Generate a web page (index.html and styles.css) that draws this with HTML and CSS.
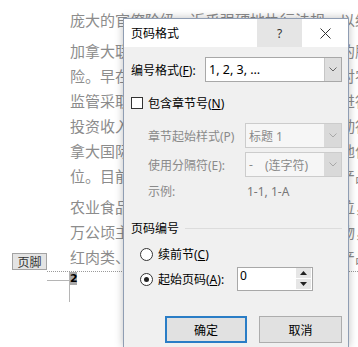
FILE: index.html
```html
<!DOCTYPE html>
<html>
<head>
<meta charset="utf-8">
<link rel="stylesheet" href="styles.css">
</head>
<body>
<div class="doc">
  <div class="para">
    <div class="line">庞大的官僚阶级，近乎强硬地执行法规，以给予帮助的情况下</div>
  </div>
  <div class="para">
    <div class="line">加拿大联邦政府对农业食品行业提供全面的服务与支持，</div>
    <div class="line">险。早在上世纪初期，加拿大政府就开始对农业资金进行</div>
    <div class="line">监管采取了多种措施，包括设立专门机构进行研究，</div>
    <div class="line">投资收入与出口补贴政策也逐步完善，推动行业向</div>
    <div class="line">拿大国际贸易中农产品出口一直占据重要地位以上</div>
    <div class="line">位。目前，加拿大已成为世界上主要的农产品出口国之一。</div>
  </div>
  <div class="para para-last">
    <div class="line">农业食品产业在加拿大经济中占有重要地位，耕地占</div>
    <div class="line">万公顷主要种植小麦、油菜籽和大豆等作物，确立</div>
    <div class="line">红肉类、乳制品和禽类产品也是主要出口产品，姬</div>
  </div>
  <div class="footer">
    <span class="footer-tag">页脚</span>
    <div class="crop"><div class="crop-h"></div></div>
    <div class="pgnum"><span class="pgnum-box">2</span></div>
  </div>
</div>

<div class="dlg">
  <div class="titlebar">
    <span class="title">页码格式</span>
    <span class="tb-btn tb-help">?</span>
    <span class="tb-btn tb-close"><svg width="11" height="11" viewBox="0 0 11 11"><path d="M0.5 0.5L10.5 10.5M10.5 0.5L0.5 10.5" stroke="#333" stroke-width="1" fill="none"/></svg></span>
  </div>
  <div class="dbody">
    <div class="row row-fmt">
      <span class="lbl-fmt">编号格式(<u>F</u>):</span>
      <div class="combo combo-fmt">
        <span class="combo-text">1, 2, 3, …</span>
        <span class="combo-arrow"><svg width="8" height="5" viewBox="0 0 8 5"><path d="M0.5 0.5L4 4L7.5 0.5" stroke="#666" stroke-width="1" fill="none"/></svg></span>
      </div>
    </div>
    <div class="row row-chk">
      <span class="chk"></span><span>包含章节号(<u>N</u>)</span>
    </div>
    <div class="row row-sub">
      <span class="lbl-sub">章节起始样式(P)</span>
      <div class="combo combo-dis">
        <span class="combo-text">标题 1</span>
        <span class="combo-arrow"><svg width="8" height="5" viewBox="0 0 8 5"><path d="M0.5 0.5L4 4L7.5 0.5" stroke="#a8a8a8" stroke-width="1" fill="none"/></svg></span>
      </div>
    </div>
    <div class="row row-sub2">
      <span class="lbl-sub">使用分隔符(E):</span>
      <div class="combo combo-dis">
        <span class="combo-text">-<span class="dash-gap"></span>(连字符)</span>
        <span class="combo-arrow"><svg width="8" height="5" viewBox="0 0 8 5"><path d="M0.5 0.5L4 4L7.5 0.5" stroke="#a8a8a8" stroke-width="1" fill="none"/></svg></span>
      </div>
    </div>
    <div class="row row-ex">
      <span class="lbl-sub">示例:</span><span class="ex-val">1-1, 1-A</span>
    </div>
    <div class="row row-head">
      <span>页码编号</span><span class="sep"></span>
    </div>
    <div class="row row-r1">
      <span class="radio"></span><span>续前节(<u>C</u>)</span>
    </div>
    <div class="row row-r2">
      <span class="radio radio-on"></span><span class="lbl-r2">起始页码(<u>A</u>):</span>
      <div class="spin">
        <span class="spin-text">0</span>
        <span class="spin-btns">
          <span class="sb"><svg width="7" height="4" viewBox="0 0 7 4"><polygon points="3.5,0 7,4 0,4" fill="#222"/></svg></span>
          <span class="sb"><svg width="7" height="4" viewBox="0 0 7 4"><polygon points="0,0 7,0 3.5,4" fill="#222"/></svg></span>
        </span>
      </div>
    </div>
    <div class="row row-btns">
      <button class="btn btn-ok">确定</button>
      <button class="btn btn-cancel">取消</button>
    </div>
  </div>
</div>
</body>
</html>
```

FILE: styles.css
```css
* { box-sizing: border-box; }
html, body { margin: 0; padding: 0; }
body {
  width: 358px;
  height: 347px;
  overflow: hidden;
  position: relative;
  background: #fff;
}

/* background document */
.doc {
  width: 358px;
  height: 347px;
  overflow: hidden;
  padding: 7px 0 0 70px;
  font-family: "Noto Sans CJK SC", sans-serif;
  font-size: 15px;
  color: #8c8c8c;
}
.para { margin-bottom: 6px; }
.para-last { margin-bottom: 0; }
.line {
  height: 25px;
  line-height: 25px;
  white-space: nowrap;
  overflow: hidden;
}
.footer {
  margin: 2px 0 0 -23px;
  border-top: 1px dotted #9a9a9a;
  position: relative;
  display: flex;
}
.footer-tag {
  position: absolute;
  right: 100%;
  bottom: calc(100% + 2px);
  width: 35px;
  height: 17px;
  border: 1px solid #a3a3a3;
  background: #e4e4e4;
  color: #333;
  font-size: 12px;
  line-height: 15px;
  text-align: center;
}
.crop { width: 22px; height: 30px; }
.crop-h { height: 9px; border-bottom: 1px solid #b5b5b5; }
.pgnum { height: 30px; border-left: 1px solid #b5b5b5; }
.pgnum-box {
  display: block;
  width: 7px;
  height: 13px;
  background: #a9a9a9;
  color: #000;
  font: bold 11px/13px "DejaVu Sans", sans-serif;
  text-align: center;
}

/* dialog */
.dlg {
  position: absolute;
  left: 123px;
  top: 18px;
  width: 226px;
  height: 329px;
  border: 1px solid #8f9db3;
  border-bottom: none;
  background: #f0f0f0;
  box-shadow: 0 0 8px rgba(0, 0, 0, 0.25);
  font-family: "Noto Sans", "Noto Sans CJK SC", sans-serif;
  font-size: 12px;
  color: #000;
}
.titlebar {
  height: 28px;
  background: #fff;
  display: flex;
  align-items: center;
}
.title { flex: 1; padding-left: 7px; }
.tb-btn {
  width: 46px;
  height: 28px;
  display: flex;
  align-items: center;
  justify-content: center;
}
.tb-help { width: 45px; background: #e5e5e5; color: #333; }

.dbody { padding: 10px 6px 0 7px; }
.row { display: flex; align-items: center; }
u { text-decoration: underline; text-underline-offset: 1px; }

.row-fmt { height: 25px; }
.lbl-fmt { width: 74px; }
.combo {
  height: 25px;
  display: flex;
  border: 1px solid #a8a8a8;
  background: #fff;
}
.combo-fmt { width: 137px; }
.combo-text {
  flex: 1;
  padding-left: 3px;
  display: flex;
  align-items: center;
  white-space: nowrap;
}
.combo-fmt .combo-text { font-size: 12.5px; }
.combo-arrow {
  width: 17px;
  background: #dedede;
  border-left: 1px solid #c6c6c6;
  display: flex;
  align-items: center;
  justify-content: center;
}
.combo-dis {
  width: 97px;
  border-color: #cccccc;
  background: #f6f6f6;
  color: #8a8a8a;
}
.combo-dis .combo-arrow { background: #d9d9d9; border-left: none; }
.dash-gap { display: inline-block; width: 12px; }

.row-chk { margin-top: 11px; height: 20px; }
.chk {
  width: 12px;
  height: 12px;
  border: 1px solid #333;
  background: #fff;
  margin-right: 5px;
}
.row-sub { margin-top: 10px; height: 25px; }
.row-sub2 { margin-top: 4px; height: 25px; }
.lbl-sub { width: 114px; padding-left: 17px; color: #8a8a8a; white-space: nowrap; }
.row-ex { margin-top: 4px; height: 20px; }
.ex-val { color: #777; padding-left: 2px; }

.row-head { margin-top: 17px; height: 20px; }
.sep { flex: 1; height: 1px; background: #dcdcdc; margin-left: 6px; }

.row-r1 { margin-top: 6px; height: 20px; }
.row-r2 { margin-top: 3px; height: 24px; }
.radio {
  width: 13px;
  height: 13px;
  border: 1px solid #333;
  border-radius: 50%;
  background: #fff;
  margin: 0 5px 0 9px;
  display: flex;
  align-items: center;
  justify-content: center;
}
.radio-on::after {
  content: "";
  width: 5px;
  height: 5px;
  border-radius: 50%;
  background: #222;
}
.lbl-r2 { width: 79px; white-space: nowrap; }
.spin {
  width: 76px;
  height: 24px;
  border: 1px solid #a8a8a8;
  background: #fff;
  display: flex;
}
.spin-text { flex: 1; padding-left: 2px; line-height: 16px; }
.spin-btns {
  width: 16px;
  display: flex;
  flex-direction: column;
  gap: 1px;
  padding: 0 1px 1px 0;
}
.sb {
  flex: 1;
  background: #e6e6e6;
  display: flex;
  align-items: center;
  justify-content: center;
}

.row-btns { margin-top: 25px; height: 27px; padding-left: 34px; }
.btn {
  height: 27px;
  width: 82px;
  border: 1px solid #adadad;
  background: #e1e1e1;
  font: inherit;
  color: #000;
  padding: 0;
}
.btn-ok { border: 2px solid #2a7dc6; }
.btn-cancel { width: 83px; margin-left: 12px; }
```
